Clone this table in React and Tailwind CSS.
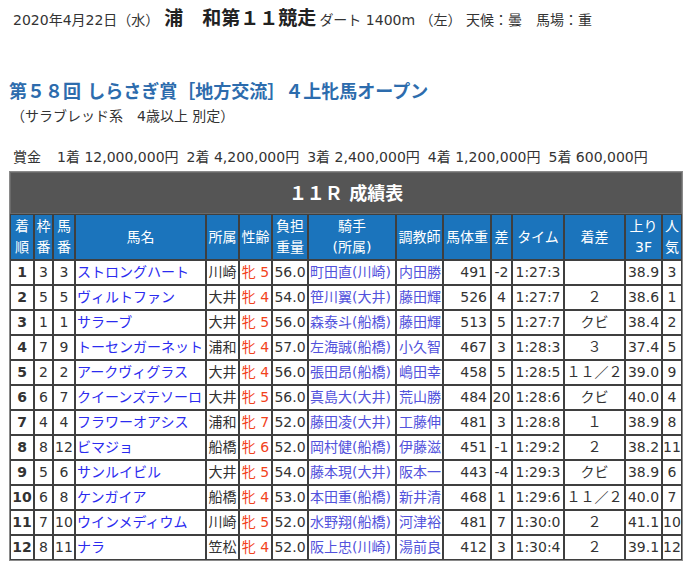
const rows = [
  ["1", "3", "3", "ストロングハート", "川崎", "5", "56.0", "町田直(川崎)", "内田勝", "491", "-2", "1:27:3", "", "38.9", "3"],
  ["2", "5", "5", "ヴィルトファン", "大井", "4", "54.0", "笹川翼(大井)", "藤田輝", "526", "4", "1:27:7", "２", "38.6", "1"],
  ["3", "1", "1", "サラーブ", "大井", "5", "56.0", "森泰斗(船橋)", "藤田輝", "513", "5", "1:27:7", "クビ", "38.4", "2"],
  ["4", "7", "9", "トーセンガーネット", "浦和", "4", "57.0", "左海誠(船橋)", "小久智", "467", "3", "1:28:3", "３", "37.4", "5"],
  ["5", "2", "2", "アークヴィグラス", "大井", "4", "56.0", "張田昂(船橋)", "嶋田幸", "458", "5", "1:28:5", "１１／２", "39.0", "9"],
  ["6", "6", "7", "クイーンズテソーロ", "大井", "5", "56.0", "真島大(大井)", "荒山勝", "484", "20", "1:28:6", "クビ", "40.0", "4"],
  ["7", "4", "4", "フラワーオアシス", "浦和", "7", "52.0", "藤田凌(大井)", "工藤伸", "481", "3", "1:28:8", "１", "38.9", "8"],
  ["8", "8", "12", "ビマジョ", "船橋", "6", "52.0", "岡村健(船橋)", "伊藤滋", "451", "-1", "1:29:2", "２", "38.2", "11"],
  ["9", "5", "6", "サンルイビル", "大井", "5", "54.0", "藤本現(大井)", "阪本一", "443", "-4", "1:29:3", "クビ", "38.9", "6"],
  ["10", "6", "8", "ケンガイア", "船橋", "4", "53.0", "本田重(船橋)", "新井清", "468", "1", "1:29:6", "１１／２", "40.0", "7"],
  ["11", "7", "10", "ウインメディウム", "川崎", "5", "52.0", "水野翔(船橋)", "河津裕", "481", "7", "1:30:0", "２", "41.1", "10"],
  ["12", "8", "11", "ナラ", "笠松", "4", "52.0", "阪上忠(川崎)", "湯前良", "412", "3", "1:30:4", "２", "39.1", "12"],
];

const prizes = [
  ["1着", "12,000,000円"],
  ["2着", "4,200,000円"],
  ["3着", "2,400,000円"],
  ["4着", "1,200,000円"],
  ["5着", "600,000円"],
];

const th = "border border-[#3f3f3f] bg-[#1b74bc] text-white font-normal p-0 leading-[21px]";
const td = "border border-[#3f3f3f] bg-white p-0 h-[25px] leading-[23px] whitespace-nowrap";

export default function App() {
  return (
    <div className="w-[686px] h-[565px] bg-white text-[#333] text-[14px] font-['DejaVu_Sans','Noto_Sans_CJK_JP',sans-serif] overflow-hidden">
      <div className="pl-[13px] pt-[7px] leading-[22px] flex items-baseline">
        <span>2020年4月22日（水）</span>
        <span className="ml-[5px] text-[19px] font-bold text-[#222]">浦　和第１１競走</span>
        <span className="ml-[3px]">ダート 1400m （左） 天候：曇　馬場：重</span>
      </div>

      <h1 className="mt-[49px] pl-[9px] text-[18px] leading-[24px] font-bold text-[#2d6cad]">
        第５８回 しらさぎ賞［地方交流］４上牝馬オープン
      </h1>
      <div className="mt-[1px] pl-[11px] leading-[22px]">（サラブレッド系　4歳以上 別定）</div>

      <div className="mt-[19px] pl-[13px] leading-[22px] flex">
        <span className="mr-[16px]">賞金</span>
        {prizes.map(([p, v]) => (
          <span key={p} className="mr-[8px]">
            {p} {v}
          </span>
        ))}
      </div>

      <table className="mt-[3px] ml-[9px] w-[674px] table-fixed border-separate border-spacing-0 border border-[#8a8a8a]">
        <colgroup>
          <col className="w-[24px]" />
          <col className="w-[19px]" />
          <col className="w-[22px]" />
          <col className="w-[131px]" />
          <col className="w-[33px]" />
          <col className="w-[33px]" />
          <col className="w-[36px]" />
          <col className="w-[88px]" />
          <col className="w-[47px]" />
          <col className="w-[48px]" />
          <col className="w-[21px]" />
          <col className="w-[52px]" />
          <col className="w-[61px]" />
          <col className="w-[37px]" />
          <col className="w-[20px]" />
        </colgroup>
        <thead>
          <tr>
            <th colSpan={15} className="h-[42px] p-0 bg-[#555] border border-[#6a6a6a] text-white text-[18px] font-bold">
              １１Ｒ 成績表
            </th>
          </tr>
          <tr className="h-[46px]">
            <th className={th}>着<br />順</th>
            <th className={th}>枠<br />番</th>
            <th className={th}>馬<br />番</th>
            <th className={th}>馬名</th>
            <th className={th}>所属</th>
            <th className={th}>性齢</th>
            <th className={th}>負担<br />重量</th>
            <th className={th}>騎手<br />(所属)</th>
            <th className={th}>調教師</th>
            <th className={th}>馬体重</th>
            <th className={th}>差</th>
            <th className={th}>タイム</th>
            <th className={th}>着差</th>
            <th className={th}>上り<br />3F</th>
            <th className={th}>人<br />気</th>
          </tr>
        </thead>
        <tbody>
          {rows.map((r) => (
            <tr key={r[0]}>
              <td className={`${td} text-center font-bold`}>{r[0]}</td>
              <td className={`${td} text-center`}>{r[1]}</td>
              <td className={`${td} text-center`}>{r[2]}</td>
              <td className={`${td} pl-[1px] text-[#2b2bef]`}>{r[3]}</td>
              <td className={`${td} text-center`}>{r[4]}</td>
              <td className={`${td} text-center text-[#f2421c]`}>牝 {r[5]}</td>
              <td className={`${td} text-center`}>{r[6]}</td>
              <td className={`${td} pl-[1px] text-[#5252dc]`}>{r[7]}</td>
              <td className={`${td} pl-[2px] text-[#5252dc]`}>{r[8]}</td>
              <td className={`${td} text-right pr-[3px]`}>{r[9]}</td>
              <td className={`${td} text-center`}>{r[10]}</td>
              <td className={`${td} text-center`}>{r[11]}</td>
              <td className={`${td} text-center`}>{r[12]}</td>
              <td className={`${td} text-center`}>{r[13]}</td>
              <td className={`${td} text-center`}>{r[14]}</td>
            </tr>
          ))}
        </tbody>
      </table>
    </div>
  );
}
